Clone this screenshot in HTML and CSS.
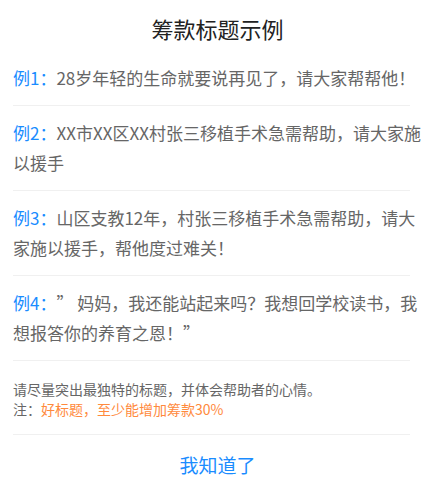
FILE: index.html
```html
<!DOCTYPE html>
<html lang="zh-CN">
<head>
<meta charset="utf-8">
<link rel="stylesheet" href="styles.css">
</head>
<body>
<div class="dialog">
  <h1 class="title">筹款标题示例</h1>
  <div class="item"><p class="text"><span class="label">例1：</span>28岁年轻的生命就要说再见了，请大家帮帮他！</p></div>
  <div class="item"><p class="text"><span class="label">例2：</span>XX市XX区XX村张三移植手术急需帮助，请大家施以援手</p></div>
  <div class="item"><p class="text"><span class="label">例3：</span>山区支教12年，村张三移植手术急需帮助，请大家施以援手，帮他度过难关！</p></div>
  <div class="item"><p class="text"><span class="label">例4：</span>” 妈妈，我还能站起来吗？我想回学校读书，我想报答你的养育之恩！”</p></div>
  <div class="item note">
    <p class="note-line">请尽量突出最独特的标题，并体会帮助者的心情。</p>
    <p class="note-line">注：<span class="hl">好标题，至少能增加筹款30%</span></p>
  </div>
  <div class="action">我知道了</div>
</div>
</body>
</html>
```
FILE: styles.css
```css
* { box-sizing: border-box; }
html, body { margin: 0; padding: 0; background: #fff; }
body {
  font-family: "Noto Sans CJK SC", "Noto Sans", sans-serif;
  color: #666;
  text-spacing-trim: space-all;
}
.dialog {
  width: 435px;
  height: 497px;
  background: #fff;
  display: flex;
  flex-direction: column;
}
.title {
  margin: 0;
  padding: 14px 0 9px;
  font-size: 22px;
  line-height: 28px;
  font-weight: normal;
  color: #222;
  text-align: center;
}
.item {
  margin: 0 25px 0 13px;
  padding: 12px 0;
  border-bottom: 1px solid #f0f0f0;
}
.text {
  margin: 0 -18px 0 0;
  font-size: 17px;
  line-height: 30px;
  color: #666;
}
.label { color: #1a8cff; }
.note { padding: 18px 0 15px; }
.note-line {
  margin: 0;
  font-size: 14px;
  line-height: 20px;
  color: #666;
}
.hl { color: #ff8a3d; }
.action {
  text-align: center;
  font-size: 19px;
  line-height: 60px;
  color: #1a8cff;
}
```
